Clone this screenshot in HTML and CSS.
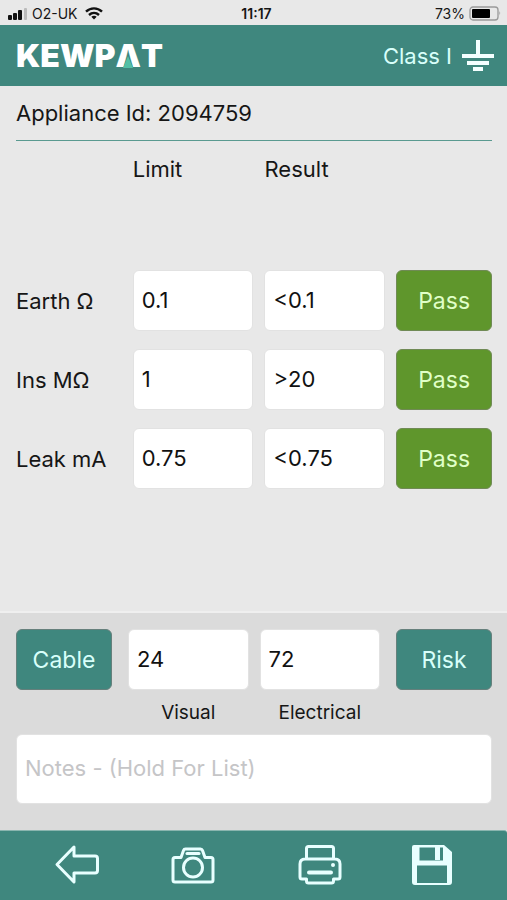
FILE: index.html
```html
<!DOCTYPE html>
<html lang="en">
<head>
<meta charset="utf-8">
<meta name="viewport" content="width=device-width, initial-scale=1">
<title>KEWPAT</title>
<link rel="stylesheet" href="styles.css">
</head>
<body>
<div class="status">
  <div class="carrier">
    <svg width="20" height="14" viewBox="0 0 20 14"><g fill="#111"><rect x="0" y="8" width="4" height="5" rx="1"/><rect x="5" y="6" width="4" height="7" rx="1"/><rect x="10" y="3" width="4" height="10" rx="1"/></g><rect x="16" y="1" width="3" height="12" rx="1" fill="#bbb"/></svg>
    <span>O2-UK</span>
    <svg class="wifi" width="18" height="13" viewBox="0 0 18 13" fill="none" stroke="#111" stroke-width="2.4"><path d="M1 4.7C5.600 .3 12.400 .3 17 4.700M4 8C7 5.200 11 5.200 14 8"/><path d="M9 12.500 6.300 9.800Q9 7.800 11.700 9.800Z" fill="#111" stroke="none"/></svg>
  </div>
  <time class="clock">11:17</time>
  <div class="power">
    <span>73%</span>
    <svg width="32" height="15" viewBox="0 0 32 15"><rect x="1" y="1" width="28" height="13" rx="3" fill="none" stroke="#999" stroke-width="1.300"/><rect x="3" y="3" width="18" height="9" rx="1" fill="#000"/><path d="M30.500 5v4.500q1.500-2.200 0-4.500z" fill="#888"/></svg>
  </div>
</div>
<header class="top">
  <h1 class="logo" aria-label="KEWPAT">KEWP<span class="peak">Λ<svg viewBox="0 0 10 12"><path d="M5 0 10 12H0z" fill="#55c0a6"/></svg></span>T</h1>
  <div class="kind">
    <span>Class I</span>
    <svg width="32" height="32" viewBox="0 0 32 32" fill="#f4ffff"><path d="M14 0h4v14h14v4H0v-4h14zM5 21h22v4H5zM11 27h10v4H11z"/></svg>
  </div>
</header>
<main class="tests">
  <h2 class="appliance">Appliance Id: 2094759</h2>
  <div class="row heads"><span></span><span>Limit</span><span>Result</span></div>
  <div class="readings">
    <div class="row">
      <label for="earth">Earth Ω</label>
      <input id="earth" value="0.1">
      <input aria-label="Earth result" value="&lt;0.1">
      <button class="btn pass">Pass</button>
    </div>
    <div class="row">
      <label for="ins">Ins MΩ</label>
      <input id="ins" value="1">
      <input aria-label="Insulation result" value="&gt;20">
      <button class="btn pass">Pass</button>
    </div>
    <div class="row">
      <label for="leak">Leak mA</label>
      <input id="leak" value="0.75">
      <input aria-label="Leakage result" value="&lt;0.75">
      <button class="btn pass">Pass</button>
    </div>
  </div>
</main>
<section class="panel">
  <div class="dates">
    <button class="btn">Cable</button>
    <div class="pair">
      <div class="field"><input id="visual" value="24"><label for="visual">Visual</label></div>
      <div class="field"><input id="electrical" value="72"><label for="electrical">Electrical</label></div>
    </div>
    <button class="btn">Risk</button>
  </div>
  <input class="notes" aria-label="Notes" placeholder="Notes - (Hold For List)">
</section>
<nav class="tools">
  <button aria-label="Back"><svg width="46" height="42" viewBox="0 0 46 42"><path d="M20 2 3 19.500 20 37V28H41Q43.500 28 43.500 25.500V13.500Q43.500 11 41 11H20Z"/></svg></button>
  <button aria-label="Camera"><svg width="46" height="42" viewBox="0 0 46 42"><path d="M5 12.500H11L13.500 5.500Q14 4 15.500 4H30.500Q32 4 32.500 5.500L35 12.500H41Q43 12.500 43 14.500V35Q43 37 41 37H5Q3 37 3 35V14.500Q3 12.500 5 12.500Z"/><path d="M17 8.500H29"/><circle cx="23" cy="22.500" r="9.500"/></svg></button>
  <button aria-label="Print"><svg width="46" height="42" viewBox="0 0 46 42"><path d="M9.500 14V3.500Q9.500 1.500 11.500 1.500H34.500Q36.500 1.500 36.500 3.500V14M9.500 34H5Q3 34 3 32V19Q3 14 8 14H38Q43 14 43 19V32Q43 34 41 34H36.500V36Q36.500 38 34.500 38H11.500Q9.500 38 9.500 36Z"/><path d="M12 27.500H34" stroke-width="4"/><circle class="solid" cx="36" cy="20" r="2"/></svg></button>
  <button aria-label="Save"><svg width="46" height="42" viewBox="0 0 46 42"><path class="solid" fill-rule="evenodd" d="M5 0H35L43 7V37Q43 40 40 40H6Q3 40 3 37V2Q3 0 5 0ZM10.500 2.500V15.500H34V2.500ZM8 20.500V38H38V20.500Z"/><path class="solid" d="M26 2h5v13h-5z"/></svg></button>
</nav>
</body>
</html>
```
FILE: styles.css
```css
* { box-sizing: border-box; }

body {
  margin: 0;
  min-height: 100vh;
  display: flex;
  flex-direction: column;
  background: #e8e8e8;
  color: #161616;
  font-family: Inter, "Liberation Sans", sans-serif;
  font-size: 22px;
  line-height: 28px;
}

svg { display: block; }

input, button { font: inherit; margin: 0; }

.status {
  height: 25px;
  padding: 2px 6px 0 8px;
  display: grid;
  grid-template-columns: 1fr auto 1fr;
  align-items: center;
  font-size: 14px;
  line-height: 20px;
}

.carrier, .power { display: flex; align-items: center; gap: 4px; }
.wifi { margin-left: 3px; }
.power { justify-content: flex-end; }
.clock { padding-left: 4px; font-weight: 600; }

.top {
  height: 61px;
  padding: 0 13px 0 16px;
  display: flex;
  align-items: center;
  justify-content: space-between;
  background: #3f877e;
  color: #d8fffa;
}

.logo {
  margin: 0;
  color: #fff;
  font-size: 32px;
  font-weight: 900;
  line-height: 40px;
}

.peak { position: relative; display: inline-block; }
.peak svg {
  position: absolute;
  left: 50%;
  bottom: 8px;
  width: 10px;
  height: 12px;
  margin-left: -5px;
}

.kind { display: flex; align-items: center; gap: 10px; }

.tests { flex: 1; padding: 0 15px 0 16px; }

.appliance {
  margin: 0;
  padding: 13px 0;
  border-bottom: 1px solid #5a9a90;
  font-size: 22px;
  font-weight: 400;
}

.row {
  display: grid;
  grid-template-columns: 106fr 121fr 121fr 96fr;
  column-gap: 11px;
  align-items: center;
}

.row > * { min-width: 0; }
.heads { padding: 14px 0 87px; }
.readings { display: grid; gap: 18px; }

label { white-space: nowrap; }

input {
  width: 100%;
  height: 61px;
  padding: 0 8px 2px;
  border: 1px solid #e2e2e2;
  border-radius: 6px;
  background: #fff;
  color: #111;
}

.btn {
  height: 61px;
  padding: 0;
  border: 1px solid #66807c;
  border-radius: 6px;
  background: #3f877e;
  color: #d8fffa;
  font-size: 23px;
}

.pass {
  border-color: #708a55;
  background: #5f962c;
  color: #e0ffc8;
}

.panel {
  padding: 16px 15px 26px 16px;
  border-top: 2px solid #efefef;
  background: #dbdbdb;
}

.dates {
  display: grid;
  grid-template-columns: 96fr 252fr 96fr;
  column-gap: 16px;
  align-items: start;
}

.pair { display: grid; grid-template-columns: 1fr 1fr; gap: 11px; }
.field { display: grid; justify-items: center; }
.field label { padding: 9px 0 7px; font-size: 19px; }

.notes { height: 70px; }
.notes::placeholder { color: #c5c5c7; opacity: 1; }

.tools {
  height: 70px;
  padding: 0 31px 0 20px;
  display: grid;
  grid-template-columns: 114fr 118fr 136fr 88fr;
  align-items: center;
  border-top: 1px solid #8ab5af;
  border-radius: 0 3px 0 0;
  background: #3f877e;
}

.tools button {
  display: grid;
  justify-items: center;
  padding: 0;
  border: 0;
  background: none;
}

.tools svg {
  fill: none;
  stroke: #e8ffff;
  stroke-width: 3;
  stroke-linecap: round;
  stroke-linejoin: round;
}

.tools .solid { fill: #e8ffff; stroke: none; }
```
